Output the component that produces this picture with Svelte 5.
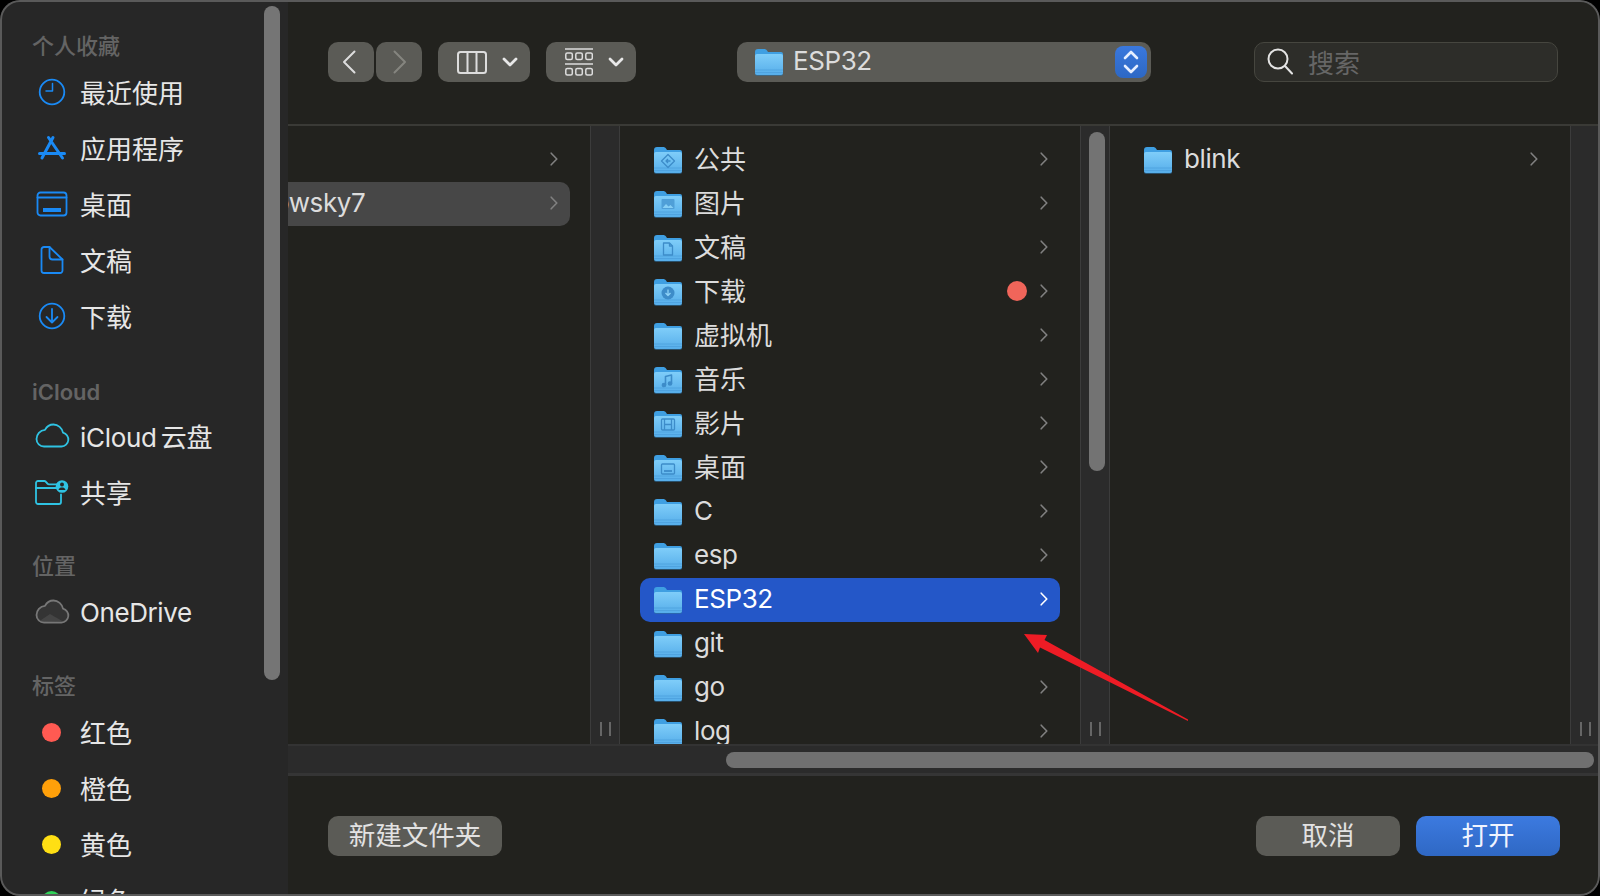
<script>
  const favourites = [
    { label: '最近使用', icon: 'clock' },
    { label: '应用程序', icon: 'apps' },
    { label: '桌面', icon: 'desktop' },
    { label: '文稿', icon: 'doc' },
    { label: '下载', icon: 'download' }
  ];
  const tags = [
    { label: '红色', color: '#ff5a52' },
    { label: '橙色', color: '#ffa00a' },
    { label: '黄色', color: '#ffdf14' },
    { label: '绿色', color: '#30d158' }
  ];
  const folders = [
    { name: '公共', glyph: 'public' },
    { name: '图片', glyph: 'pictures' },
    { name: '文稿', glyph: 'doc' },
    { name: '下载', glyph: 'download', dot: true },
    { name: '虚拟机' },
    { name: '音乐', glyph: 'music' },
    { name: '影片', glyph: 'movie' },
    { name: '桌面', glyph: 'desktop' },
    { name: 'C' },
    { name: 'esp' },
    { name: 'ESP32', selected: true },
    { name: 'git', noChevron: true },
    { name: 'go' },
    { name: 'log' }
  ];

  // latin names are set a little tighter than the CJK ones
  const isLatin = (s) => /^[\x00-\x7f]+$/.test(s);
</script>

{#snippet chevron(color = '#808080')}
  <svg class="chev" width="8" height="14" viewBox="0 0 8 14" fill="none" stroke={color} stroke-width="1.6" stroke-linecap="round" stroke-linejoin="round">
    <path d="M1.2 1.2 6.8 7l-5.6 5.8" />
  </svg>
{/snippet}

{#snippet handle()}
  <div class="handle"><i></i><i></i></div>
{/snippet}

{#snippet folder(glyph)}
  <svg class="folder" width="28" height="27" viewBox="0 0 28 27">
    <defs>
      <linearGradient id="fold" x1="0" y1="0" x2="0" y2="1">
        <stop offset="0" stop-color="#7fcdf9" />
        <stop offset="1" stop-color="#56aeea" />
      </linearGradient>
    </defs>
    <path d="M2 26h24a2 2 0 0 0 2-2v-1H0v1a2 2 0 0 0 2 2Z" fill="#2f6f9f" transform="translate(0 1)" opacity=".6" />
    <path d="M0 3a3 3 0 0 1 3-3h6c1.500 0 2.200.5 3 1.500L13 3h13a2 2 0 0 1 2 2v4H0Z" fill="#3f9fe2" />
    <path d="M0 7a2 2 0 0 1 2-2h24a2 2 0 0 1 2 2v17a2 2 0 0 1-2 2H2a2 2 0 0 1-2-2Z" fill="url(#fold)" />
    <path d="M0 21h28M0 23.500h28" stroke="#4a9edc" stroke-width="1" opacity=".7" />
    <g fill="none" stroke="#3d8cc9" stroke-width="1.300" stroke-linejoin="round">
      {#if glyph === 'public'}
        <path d="M14 7.500 20.500 14 14 20.500 7.500 14Z" />
        <path d="M16.500 14h-4.500m2-2-2 2 2 2" />
      {:else if glyph === 'pictures'}
        <rect x="7.500" y="8" width="13" height="10" rx="1" fill="#4f9fd8" stroke="none" />
        <path d="m8.500 17 3.500-4 2.500 2.500 2-1.500 3 3Z" fill="#86cff6" stroke="none" />
      {:else if glyph === 'doc'}
        <path d="M9.500 8h6l3 3v9h-9Z" />
        <path d="M15.500 8v3h3" />
      {:else if glyph === 'download'}
        <circle cx="14" cy="14" r="6.500" fill="#3d8cc9" stroke="none" />
        <path d="M14 10.500v6m-2.500-2.500 2.500 2.500 2.500-2.500" stroke="#8ed3f8" />
      {:else if glyph === 'music'}
        <path d="M11.500 18V9.500l6-1.500v8.500" stroke-width="1.600" />
        <circle cx="10" cy="18" r="1.700" fill="#3d8cc9" />
        <circle cx="16" cy="16.500" r="1.700" fill="#3d8cc9" />
      {:else if glyph === 'movie'}
        <rect x="7.500" y="8" width="13" height="11" rx="1" />
        <path d="M10.500 8v11M17.500 8v11M10.500 13.500h7" />
      {:else if glyph === 'desktop'}
        <rect x="7.500" y="9" width="13" height="10" rx="1" />
        <path d="M10 16h8" stroke-width="1.800" />
      {/if}
    </g>
  </svg>
{/snippet}

{#snippet sideIcon(name)}
  <svg class="side-icon" width="36" height="30" viewBox="0 0 36 30" fill="none" stroke="#1a8af5" stroke-width="1.800" stroke-linecap="round" stroke-linejoin="round">
    {#if name === 'clock'}
      <circle cx="18" cy="15" r="12.300" />
      <path d="M18.500 6.500V14H12" stroke-width="1.500" />
    {:else if name === 'apps'}
      <path d="M19 4.500 8 25M14.500 4.500 28.500 25M5.500 20.500h25" stroke-width="3" />
    {:else if name === 'desktop'}
      <rect x="3.500" y="3.500" width="29" height="23" rx="3" />
      <path d="M3.500 8.500h29" />
      <rect x="9" y="19" width="18" height="4" fill="#1a8af5" stroke="none" />
    {:else if name === 'doc'}
      <path d="M15.500 2H10a2.500 2.500 0 0 0-2.500 2.500v21A2.500 2.500 0 0 0 10 28h16a2.500 2.500 0 0 0 2.500-2.500V14.500L15.500 2Z" />
      <path d="M15.500 2v9.500a3 3 0 0 0 3 3h10" />
    {:else if name === 'download'}
      <circle cx="18" cy="15" r="12.300" />
      <path d="M18 8v13.500m-5.500-5.500 5.500 5.500 5.500-5.500" />
    {:else if name === 'cloud'}
      <path d="M10 26h17.500a7 7 0 0 0 1.500-13.800C28.200 7.500 24 4 19.500 4c-3.800 0-6.800 2-8.500 5.300C6 9.500 2.500 14 2.500 18.500 2.500 22.800 6 26 10 26Z" stroke="#2fc3e3" transform="translate(0 -.5)" />
    {:else if name === 'share'}
      <g stroke="#2fc3e3">
        <path d="M27 17.500V25a2 2 0 0 1-2 2H4a2 2 0 0 1-2-2V6a2 2 0 0 1 2-2h6.500c1.200 0 2 1.500 2.800 2.500.5.500 1 .8 1.700.8h8" />
        <path d="M2 11h22" />
      </g>
      <circle cx="28" cy="9.500" r="6.300" fill="#2fc3e3" stroke="none" />
      <circle cx="28" cy="7.500" r="2" fill="#272727" stroke="none" />
      <path d="M24.500 13c.5-2 2-2.500 3.500-2.500s3 .5 3.500 2.500" fill="#272727" stroke="none" />
    {:else if name === 'onedrive'}
      <path d="M10 26h17.500a7 7 0 0 0 1.500-13.800C28.200 7.500 24 4 19.500 4c-3.800 0-6.800 2-8.500 5.300C6 9.500 2.500 14 2.500 18.500 2.500 22.800 6 26 10 26Z" stroke="#777" fill="#343434" transform="translate(0 -.5)" />
      <path d="M5.500 24 16 17l13 7.500" stroke="none" fill="#454545" />
    {/if}
  </svg>
{/snippet}

<div class="window">
  <aside class="sidebar">
    <div class="side-thumb"></div>
    <div class="side-head">个人收藏</div>
    {#each favourites as f}
      <div class="side-item">{@render sideIcon(f.icon)}<span>{f.label}</span></div>
    {/each}
    <div class="side-head gap latin-head">iCloud</div>
    <div class="side-item">{@render sideIcon('cloud')}<span class="icloud">iCloud 云盘</span></div>
    <div class="side-item">{@render sideIcon('share')}<span>共享</span></div>
    <div class="side-head gap">位置</div>
    <div class="side-item">{@render sideIcon('onedrive')}<span class="latin">OneDrive</span></div>
    <div class="side-head gap">标签</div>
    {#each tags as t}
      <div class="side-item">
        <span class="tag-slot"><i class="tag" style:background={t.color}></i></span>
        <span>{t.label}</span>
      </div>
    {/each}
  </aside>

  <main class="main">
    <header class="toolbar">
      <button class="tb nav back">
        <svg width="14" height="24" viewBox="0 0 14 24" fill="none" stroke="#ddd" stroke-width="2" stroke-linecap="round" stroke-linejoin="round"><path d="M12.500 1.500 2 12l10.500 10.500" /></svg>
      </button>
      <button class="tb nav next">
        <svg width="14" height="24" viewBox="0 0 14 24" fill="none" stroke="#85857f" stroke-width="2" stroke-linecap="round" stroke-linejoin="round"><path d="M1.500 1.500 12 12 1.500 22.500" /></svg>
      </button>
      <button class="tb menu view">
        <svg width="30" height="23" viewBox="0 0 30 23" fill="none" stroke="#ddd" stroke-width="2"><rect x="1" y="1" width="28" height="21" rx="2.500" /><path d="M10.500 1v21M19.500 1v21" /></svg>
        <svg class="drop" width="16" height="10" viewBox="0 0 16 10" fill="none" stroke="#e8e8e8" stroke-width="2.800" stroke-linecap="round" stroke-linejoin="round"><path d="m2 2 6 6 6-6" /></svg>
      </button>
      <button class="tb menu group">
        <svg width="28" height="28" viewBox="0 0 28 28" fill="none" stroke="#ddd" stroke-width="1.500">
          <path d="M0 1h28M0 16h28" />
          {#each [0, 10, 20] as x}
            <rect x={x + .8} y="5" width="6.500" height="6.500" rx="1.500" />
            <rect x={x + .8} y="20.500" width="6.500" height="6.500" rx="1.500" />
          {/each}
        </svg>
        <svg class="drop" width="16" height="10" viewBox="0 0 16 10" fill="none" stroke="#e8e8e8" stroke-width="2.800" stroke-linecap="round" stroke-linejoin="round"><path d="m2 2 6 6 6-6" /></svg>
      </button>
      <div class="tb path">
        {@render folder()}
        <span class="path-name latin">ESP32</span>
        <span class="stepper">
          <svg width="18" height="26" viewBox="0 0 18 26" fill="none" stroke="#e6eeff" stroke-width="2.600" stroke-linecap="round" stroke-linejoin="round"><path d="m3 9 6-6 6 6M3 17l6 6 6-6" /></svg>
        </span>
      </div>
      <div class="search">
        <svg width="26" height="28" viewBox="0 0 26 28" fill="none" stroke="#e4e4e4" stroke-width="2" stroke-linecap="round"><circle cx="11" cy="11" r="9.500" /><path d="m18 18 7 7.500" /></svg>
        <span>搜索</span>
      </div>
    </header>

    <section class="browser">
      <div class="col first">
        <div class="list">
          <div class="row"><span class="spacer"></span>{@render chevron()}</div>
          <div class="row parent"><span class="name latin clipped">owsky7</span><span class="spacer"></span>{@render chevron()}</div>
        </div>
        <div class="strip">{@render handle()}</div>
      </div>
      <div class="col second">
        <div class="list">
          {#each folders as f}
            <div class="row" class:selected={f.selected}>
              {@render folder(f.glyph)}
              <span class="name" class:latin={isLatin(f.name)}>{f.name}</span>
              <span class="spacer"></span>
              {#if f.dot}<i class="dot"></i>{/if}
              {#if !f.noChevron}{@render chevron(f.selected ? '#ffffff' : '#808080')}{/if}
            </div>
          {/each}
        </div>
        <div class="strip">
          <div class="col-thumb"></div>
          {@render handle()}
        </div>
      </div>
      <div class="col third">
        <div class="list">
          <div class="row">
            {@render folder()}
            <span class="name latin">blink</span>
            <span class="spacer"></span>
            {@render chevron()}
          </div>
        </div>
        <div class="strip">{@render handle()}</div>
      </div>
    </section>

    <div class="hscroll"><div class="hthumb"></div></div>

    <footer class="footer">
      <button class="btn newfolder">新建文件夹</button>
      <span class="spacer"></span>
      <button class="btn action">取消</button>
      <button class="btn action primary">打开</button>
    </footer>
  </main>

  <svg class="arrow" width="180" height="100" viewBox="0 0 180 100">
    <path d="M14 4 37 5 34.500 10 178 89.500V91L30 17.500 28 23Z" fill="#ee1c25" />
  </svg>
</div>

<style>
  :global(body) {
    margin: 0;
    background: #000;
  }

  .window {
    position: relative;
    display: flex;
    width: 1600px;
    height: 896px;
    overflow: hidden;
    border-radius: 20px;
    background: #22221e;
    font-family: Inter, "Noto Sans CJK SC", sans-serif;
    font-size: 26px;
    color: #dcdcdc;
  }

  /* window edge sits on top of everything */
  .window::after {
    content: '';
    position: absolute;
    inset: 0;
    border: 2px solid #5a5a5a;
    border-radius: 20px;
    pointer-events: none;
  }

  .spacer {
    flex: 1;
  }

  .latin {
    letter-spacing: -0.4px;
  }

  .sidebar {
    position: relative;
    flex: 0 0 288px;
    padding-top: 29px;
    overflow: hidden;
    background: #272727;
    color: #e6e6e6;
  }

  .side-thumb {
    position: absolute;
    left: 264px;
    top: 6px;
    width: 16px;
    height: 674px;
    border-radius: 8px;
    background: #757575;
  }

  .side-head {
    height: 35px;
    padding-left: 32px;
    line-height: 35px;
    font-size: 22px;
    font-weight: 500;
    color: #646464;
  }

  .side-head.gap {
    margin-top: 29px;
  }

  .latin-head {
    line-height: 39px;
    font-weight: 600;
  }

  .side-item {
    display: flex;
    align-items: center;
    height: 56px;
    padding-left: 34px;
    gap: 10px;
  }

  .side-item span:last-child {
    padding-bottom: 2px;
  }

  .side-item span.latin {
    padding-bottom: 0;
  }

  .icloud {
    word-spacing: -3px;
    letter-spacing: -0.3px;
  }

  .tag-slot {
    display: flex;
    justify-content: center;
    width: 35px;
    margin-right: 1px;
  }

  .tag {
    width: 19px;
    height: 19px;
    border-radius: 50%;
  }

  .main {
    flex: 1;
    min-width: 0;
    display: flex;
    flex-direction: column;
  }

  .toolbar {
    flex: 0 0 126px;
    box-sizing: border-box;
    display: flex;
    align-items: flex-start;
    padding: 42px 0 0 40px;
    border-bottom: 2px solid #3a3a36;
  }

  .tb {
    box-sizing: border-box;
    display: flex;
    align-items: center;
    height: 40px;
    padding: 0;
    border: none;
    border-radius: 10px;
    background: #5b5b56;
    font: inherit;
    color: inherit;
  }

  .nav {
    width: 46px;
    justify-content: center;
  }

  .back {
    padding-right: 5px;
  }

  .next {
    margin-left: 2px;
    padding-left: 1px;
  }

  .menu {
    margin-left: 16px;
    padding-left: 19px;
  }

  .view {
    width: 92px;
  }

  .group {
    width: 90px;
  }

  .drop {
    margin-left: 15px;
  }

  .path {
    width: 414px;
    margin-left: 101px;
    padding: 0 4px 0 18px;
  }

  .path-name {
    flex: 1;
    margin-left: 10px;
    padding-bottom: 4px;
  }

  .stepper {
    display: flex;
    align-items: center;
    justify-content: center;
    width: 32px;
    height: 32px;
    border-radius: 8px;
    background: linear-gradient(#3a78dd, #2d68c4);
  }

  .search {
    box-sizing: border-box;
    display: flex;
    align-items: center;
    gap: 15px;
    width: 304px;
    height: 40px;
    margin-left: 103px;
    padding-left: 12px;
    border: 1.5px solid #46463f;
    border-radius: 10px;
    background: #2d2d29;
    color: #666;
  }

  .search span {
    padding-bottom: 2px;
  }

  .browser {
    flex: 0 0 618px;
    display: flex;
    overflow: hidden;
  }

  .col {
    display: flex;
    flex: none;
  }

  .first {
    width: 332px;
  }

  .second,
  .third {
    width: 490px;
  }

  .list {
    flex: 1;
    min-width: 0;
    padding-top: 12px;
    overflow: hidden;
  }

  .row {
    display: flex;
    align-items: center;
    height: 44px;
    margin: 0 20px;
    padding: 0 12px 0 14px;
    border-radius: 10px;
  }

  .first .row {
    margin-left: 0;
    padding-left: 0;
    border-radius: 0 10px 10px 0;
  }

  .parent {
    background: #474747;
  }

  .selected {
    background: #2457c8;
    color: #fff;
  }

  .folder {
    flex: none;
  }

  .name {
    margin-left: 12px;
    padding-bottom: 5px;
    white-space: nowrap;
  }

  .name.latin {
    padding-bottom: 3px;
  }

  .name.clipped {
    margin-left: -14px;
  }

  .chev {
    flex: none;
    margin-bottom: 2px;
  }

  .dot {
    width: 20px;
    height: 20px;
    margin-right: 13px;
    margin-bottom: 2px;
    border-radius: 50%;
    background: #f0655a;
  }

  .strip {
    position: relative;
    flex: 0 0 30px;
    box-sizing: border-box;
    display: flex;
    flex-direction: column;
    justify-content: flex-end;
    padding-bottom: 8px;
    border-left: 1.500px solid #3c3c3c;
    border-right: 1.500px solid #3c3c3c;
    background: #2b2b2b;
  }

  .third .strip {
    border-right: none;
  }

  .col-thumb {
    position: absolute;
    left: 7.500px;
    top: 6px;
    width: 16px;
    height: 339px;
    border-radius: 8px;
    background: #737373;
  }

  .handle {
    display: flex;
    justify-content: center;
    gap: 7px;
  }

  .handle i {
    width: 2px;
    height: 14px;
    background: #666;
  }

  .hscroll {
    flex: 0 0 32px;
    box-sizing: border-box;
    padding: 6px 0 0 438px;
    border-top: 2px solid #333;
    border-bottom: 3px solid #353535;
    background: #2b2b2b;
  }

  .hthumb {
    width: 868px;
    height: 16px;
    border-radius: 8px;
    background: #707070;
  }

  .footer {
    flex: 1;
    display: flex;
    align-items: flex-start;
    gap: 16px;
    padding: 40px 40px 0;
  }

  .btn {
    height: 40px;
    padding: 0 0 3px;
    border: none;
    border-radius: 10px;
    background: #5b5b56;
    font: inherit;
    font-size: 26.5px;
    line-height: 26px;
    color: #e2e2e2;
  }

  .newfolder {
    width: 174px;
  }

  .action {
    width: 144px;
  }

  .primary {
    background: linear-gradient(#3c7ae0, #2f68c4);
    color: #f0f4ff;
  }

  /* red annotation drawn over the screenshot */
  .arrow {
    position: absolute;
    left: 1010px;
    top: 630px;
  }
</style>
